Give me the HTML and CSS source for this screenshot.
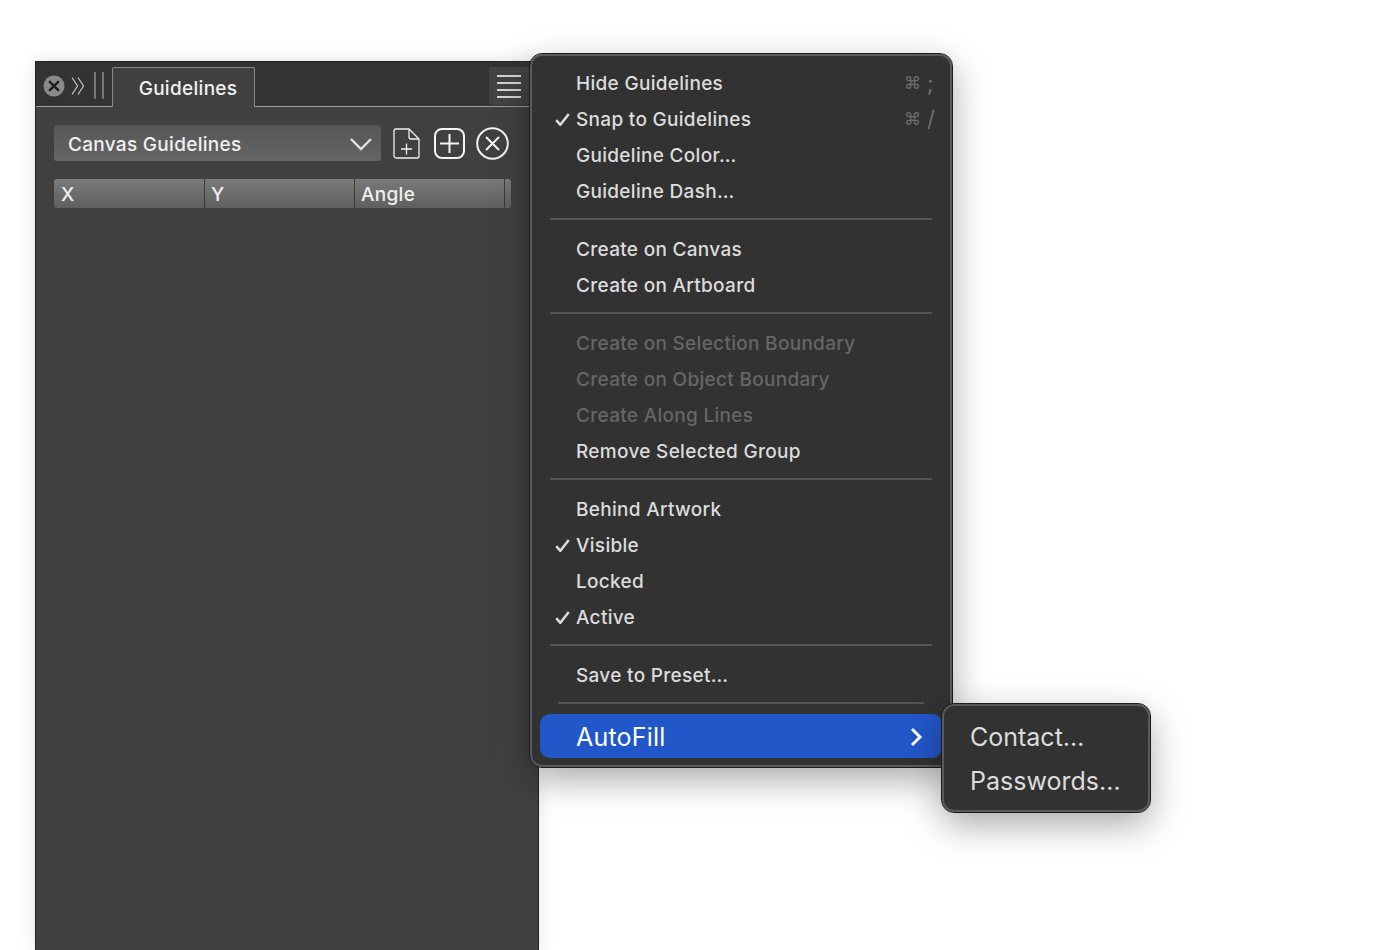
FILE: index.html
```html
<!DOCTYPE html>
<html lang="en">
<head>
<meta charset="utf-8">
<title>Guidelines</title>
<link rel="stylesheet" href="styles.css">
</head>
<body>
<svg class="defs" width="0" height="0" aria-hidden="true"><symbol id="tick" viewBox="0 0 15 13"><path d="M1.200 7.200L5.300 11.800L13.800 1" stroke="#dcdcdc" stroke-width="2.500" fill="none"/></symbol></svg>
<section class="panel">
  <header class="panel-head">
    <div class="head-tools">
      <span class="close-btn">
        <svg width="22" height="22" viewBox="0 0 22 22"><circle cx="11" cy="11" r="10.500" fill="#8a8a8a"/><path d="M6.800 6.800l8.400 8.400M15.200 6.800l-8.400 8.400" stroke="#1e1e1e" stroke-width="2.400" stroke-linecap="round" fill="none"/></svg>
      </span>
      <svg class="collapse" width="14" height="20" viewBox="0 0 14 20"><path d="M1 1.500l5.500 8.500L1 18.500M7 1.500l5.500 8.500L7 18.500" stroke="#c8c8c8" stroke-width="1.200" fill="none"/></svg>
      <span class="grip"></span>
    </div>
    <div class="tab">Guidelines</div>
    <div class="head-fill">
      <span class="burger"><i></i><i></i><i></i><i></i></span>
    </div>
  </header>
  <div class="controls">
    <div class="select">
      <span class="select-text">Canvas Guidelines</span>
      <svg width="24" height="14" viewBox="0 0 24 14"><path d="M2 2l10 10L22 2" stroke="#e2e2e2" stroke-width="2.400" fill="none"/></svg>
    </div>
    <svg class="tool doc" width="27" height="31" viewBox="0 0 27 31"><path d="M1 3a2 2 0 0 1 2-2H16l10 10V28a2 2 0 0 1-2 2H3a2 2 0 0 1-2-2z" stroke="#f0f0f0" stroke-width="1.300" fill="none"/><path d="M16 1v8a2 2 0 0 0 2 2h8" stroke="#f0f0f0" stroke-width="1.300" fill="none"/><path d="M13.500 15.500v11M8 21h11" stroke="#f0f0f0" stroke-width="1.300" fill="none"/></svg>
    <svg class="tool plus" width="31" height="31" viewBox="0 0 31 31"><rect x="1" y="1" width="29" height="29" rx="7" stroke="#f4f4f4" stroke-width="2" fill="none"/><path d="M15.500 6v19M6 15.500h19" stroke="#f4f4f4" stroke-width="2" fill="none"/></svg>
    <svg class="tool remove" width="33" height="33" viewBox="0 0 33 33"><circle cx="16.500" cy="16.500" r="15.300" stroke="#f4f4f4" stroke-width="2" fill="none"/><path d="M10 10l13 13M23 10L10 23" stroke="#f4f4f4" stroke-width="2" fill="none"/></svg>
  </div>
  <div class="table-head">
    <div class="col">X</div>
    <div class="col">Y</div>
    <div class="col">Angle</div>
    <div class="col-end"></div>
  </div>
</section>

<nav class="menu main-menu">
  <div class="item"><span class="check"></span><span class="label">Hide Guidelines</span><span class="keys"><span class="cmd">⌘</span><span class="key">;</span></span></div>
  <div class="item"><span class="check"><svg width="15" height="13"><use href="#tick"/></svg></span><span class="label">Snap to Guidelines</span><span class="keys"><span class="cmd">⌘</span><span class="key">/</span></span></div>
  <div class="item"><span class="check"></span><span class="label">Guideline Color…</span></div>
  <div class="item"><span class="check"></span><span class="label">Guideline Dash…</span></div>
  <hr class="sep">
  <div class="item"><span class="check"></span><span class="label">Create on Canvas</span></div>
  <div class="item"><span class="check"></span><span class="label">Create on Artboard</span></div>
  <hr class="sep">
  <div class="item off"><span class="check"></span><span class="label">Create on Selection Boundary</span></div>
  <div class="item off"><span class="check"></span><span class="label">Create on Object Boundary</span></div>
  <div class="item off"><span class="check"></span><span class="label">Create Along Lines</span></div>
  <div class="item"><span class="check"></span><span class="label">Remove Selected Group</span></div>
  <hr class="sep">
  <div class="item"><span class="check"></span><span class="label">Behind Artwork</span></div>
  <div class="item"><span class="check"><svg width="15" height="13"><use href="#tick"/></svg></span><span class="label">Visible</span></div>
  <div class="item"><span class="check"></span><span class="label">Locked</span></div>
  <div class="item"><span class="check"><svg width="15" height="13"><use href="#tick"/></svg></span><span class="label">Active</span></div>
  <hr class="sep">
  <div class="item"><span class="check"></span><span class="label">Save to Preset…</span></div>
  <hr class="sep short">
  <div class="item active">
    <span class="label">AutoFill</span>
    <svg width="14" height="20" viewBox="0 0 14 20"><path d="M3 2l8 8-8 8" stroke="#fff" stroke-width="3" fill="none"/></svg>
  </div>
</nav>

<nav class="menu sub-menu">
  <div class="sub-item">Contact…</div>
  <div class="sub-item">Passwords…</div>
</nav>
</body>
</html>
```
FILE: styles.css
```css
* { box-sizing: border-box; }
html, body { margin: 0; height: 100%; }
body {
  background: #fff;
  font-family: Inter, "Liberation Sans", sans-serif;
  overflow: hidden;
  position: relative;
}
.defs { position: absolute; }
.panel {
  position: absolute;
  left: 35px;
  top: 61px;
  width: 504px;
  height: 889px;
  background: #404040;
  border: 1px solid #222;
  border-bottom: 0;
  box-shadow: 0 0 16px rgba(0, 0, 0, .12);
}
.panel-head {
  display: flex;
  height: 45px;
  background: #333;
}
.head-tools {
  display: flex;
  align-items: center;
  width: 76px;
  padding: 3px 0 0 7px;
  border-bottom: 1px solid #a0a0a0;
}
.close-btn { display: flex; width: 22px; height: 22px; }
.collapse { margin-left: 6px; }
.grip {
  width: 10px;
  height: 27px;
  margin-left: 9px;
  border-left: 2px solid #777;
  border-right: 2px solid #777;
}
.tab {
  width: 143px;
  height: 40px;
  margin-top: 5px;
  padding: 9px 0 0 9px;
  background: #404040;
  border: 1px solid #8a8a8a;
  border-bottom: 0;
  border-radius: 2px 2px 0 0;
  color: #f0f0f0;
  font-size: 19px;
  font-weight: 500;
  letter-spacing: .3px;
  text-align: center;
  line-height: 24px;
}
.head-fill {
  flex: 1;
  display: flex;
  justify-content: flex-start;
  padding: 5px 0 1px 234px;
  border-bottom: 1px solid #a0a0a0;
}
.burger {
  display: flex;
  flex-direction: column;
  justify-content: center;
  gap: 5px;
  width: 40px;
  height: 38px;
  padding: 0 8px;
  background: #434343;
  border-radius: 2px;
}
.burger i { display: block; height: 2px; background: #d4d4d4; }
.controls {
  display: flex;
  align-items: center;
  height: 36px;
  margin: 18px 0 0 18px;
}
.select {
  display: flex;
  align-items: center;
  justify-content: space-between;
  width: 327px;
  height: 36px;
  padding: 2px 8px 0 14px;
  background: linear-gradient(#565656, #656565);
  border-radius: 3px;
  color: #f0f0f0;
  font-size: 19px;
  font-weight: 500;
  letter-spacing: .3px;
}
.select-text { padding-top: 1px; }
.tool { flex: none; }
.doc { margin-left: 12px; }
.plus { margin-left: 14px; }
.remove { margin-left: 11px; }
.table-head {
  display: flex;
  width: 457px;
  height: 29px;
  margin: 18px 0 0 18px;
  background: linear-gradient(#7a7a7a, #5f5f5f);
  border-radius: 3px;
  color: #f0f0f0;
  font-size: 19px;
  font-weight: 500;
  letter-spacing: .3px;
}
.col {
  width: 150px;
  padding-left: 6px;
  line-height: 31px;
  border-right: 1px solid #3a3a3a;
}
.col:first-child { width: 151px; padding-left: 7px; }
.col-end { flex: 1; }
.menu {
  position: absolute;
  background: #323232;
  border: 2px solid #5a5a5a;
  outline: 1px solid #1c1c1c;
  box-shadow: 0 12px 36px rgba(0, 0, 0, .35);
}
.main-menu {
  left: 530px;
  top: 54px;
  width: 422px;
  height: 713px;
  padding: 9px 8px 0;
  border-radius: 12px;
}
.item {
  display: flex;
  align-items: center;
  height: 36px;
  color: #dcdcdc;
  font-size: 19px;
  font-weight: 500;
  letter-spacing: .3px;
}
.item.off { color: #666; }
.check {
  display: flex;
  align-items: center;
  width: 36px;
  padding-left: 15px;
}
.label { flex: 1; }
.keys {
  display: flex;
  align-items: center;
  gap: 6px;
  padding-right: 9px;
  color: #6e6e6e;
}
.cmd {
  font-family: "DejaVu Sans", sans-serif;
  font-size: 17px;
  letter-spacing: 0;
}
.key {
  width: 6px;
  font-size: 22px;
  font-weight: 400;
  letter-spacing: 0;
}
.sep {
  height: 2px;
  margin: 9px 10px 11px;
  background: #555;
  border: 0;
}
.sep.short { margin: 9px 18px 10px; }
.item.active {
  height: 44px;
  padding: 1px 19px 0 36px;
  background: #2257c9;
  border-radius: 10px;
  color: #fff;
  font-size: 25px;
  font-weight: 400;
  letter-spacing: .2px;
}
.sub-menu {
  left: 942px;
  top: 704px;
  width: 208px;
  height: 108px;
  padding: 9px 0 0 26px;
  border-radius: 12px;
}
.sub-item {
  height: 44px;
  color: #dcdcdc;
  font-size: 25px;
  line-height: 44px;
}
```
